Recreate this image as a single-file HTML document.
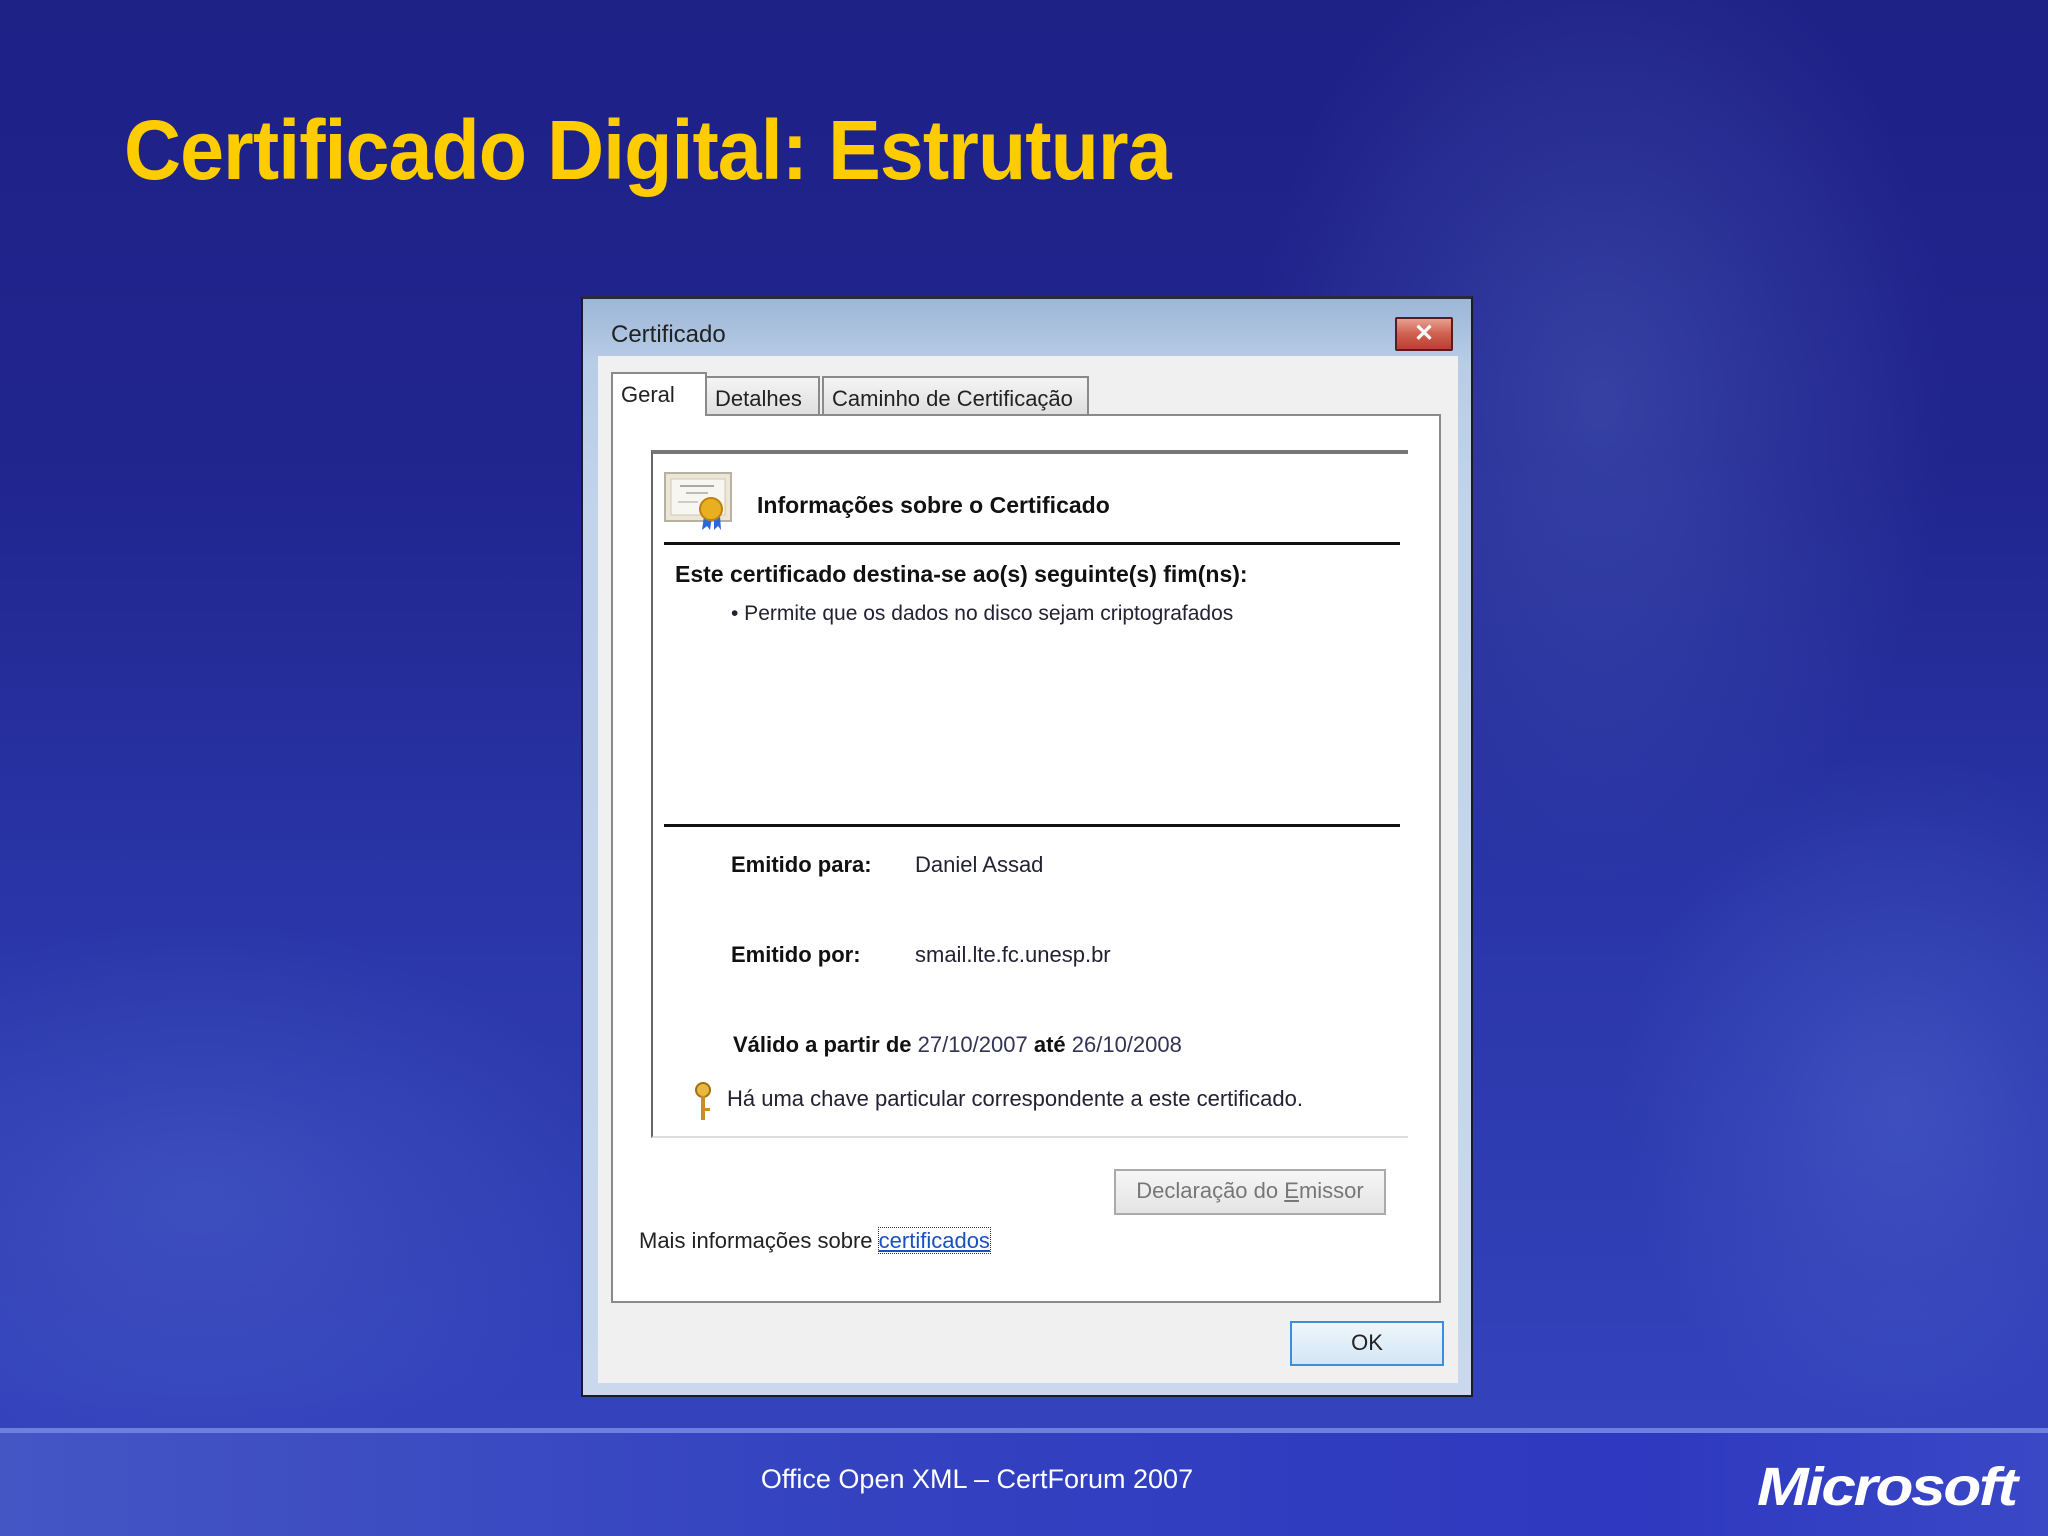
<!DOCTYPE html>
<html><head><meta charset="utf-8"><style>
*{margin:0;padding:0;box-sizing:border-box}
body{width:2048px;height:1536px;overflow:hidden;position:relative;font-family:"Liberation Sans",sans-serif;
background:linear-gradient(180deg,#1e2186 0%,#20258e 30%,#2a36a8 60%,#3342bb 90%,#3540bc 100%);}
.glow{position:absolute;inset:0;background:radial-gradient(ellipse 500px 700px at 1600px 400px,rgba(120,150,230,.25),transparent 70%),radial-gradient(ellipse 600px 400px at 200px 1200px,rgba(100,130,220,.25),transparent 70%),radial-gradient(ellipse 400px 500px at 1900px 1100px,rgba(110,140,230,.25),transparent 70%);}
.title{position:absolute;left:124px;top:102px;font-size:84px;font-weight:bold;color:#ffcc00;white-space:nowrap;transform-origin:0 0;transform:scaleX(0.94);letter-spacing:-1px}
.fline{position:absolute;left:0;top:1428px;width:2048px;height:5px;background:#6f7fe0}
.fband{position:absolute;left:0;top:1433px;width:2048px;height:103px;background:linear-gradient(90deg,#4456c4,#3443c0 40%,#2e38c0 80%,#3a48c6)}
.foot{position:absolute;left:0;width:1954px;top:1464px;text-align:center;color:#fff;font-size:27px}
.ms{position:absolute;left:1757px;top:1456px;color:#fff;font-size:54px;font-weight:bold;font-style:italic;letter-spacing:-2px;transform:scaleX(1.15);transform-origin:0 0}
.dlg{position:absolute;left:581px;top:296px;width:892px;height:1101px;background:linear-gradient(180deg,#9db7d8 0%,#b8cde6 6%,#c2d4ea 20%,#c9d8ec 100%);border:2px solid #1a1a2a;border-top:3px solid #2a2a3a}
.ttl{position:absolute;left:28px;top:22px;font-size:24px;color:#222}
.close{position:absolute;left:812px;top:18px;width:58px;height:34px;background:linear-gradient(180deg,#e8a090,#d06050 50%,#b84030);border:2px solid #5a1a20;border-radius:2px;color:#fff;font-weight:bold;font-size:24px;text-align:center;line-height:29px}
.client{position:absolute;left:15px;top:57px;width:860px;height:1027px;background:#f0f0f0}
.tabpage{position:absolute;left:13px;top:58px;width:830px;height:889px;background:#fff;border:2px solid #8a8a8a}
.tab{position:absolute;top:20px;height:40px;border:2px solid #8a8a8a;border-bottom:none;font-size:22px;color:#222;padding:8px 0 0 8px;background:linear-gradient(#f4f4f4,#dedede)}
.inner{position:absolute;left:38px;top:34px;width:757px;height:688px;border-left:2px solid #666;border-top:4px solid #777;border-bottom:2px solid #ddd}
.t{position:absolute;white-space:nowrap;color:#111}
.b{font-weight:bold}
.btn{position:absolute;border:2px solid #aaa;background:linear-gradient(#f6f6f6,#e4e4e4);font-size:22px;color:#777;text-align:center}
</style></head><body>
<div class="glow"></div>
<div class="title">Certificado Digital: Estrutura</div>
<div class="fband"></div><div class="fline"></div>
<div class="foot">Office Open XML – CertForum 2007</div>
<div class="ms">Microsoft</div>

<div class="dlg">
 <div class="ttl">Certificado</div>
 <div class="close">✕</div>
 <div class="client">
  <div class="tab" style="left:13px;top:16px;width:96px;height:44px;background:#fff;z-index:2;border-bottom:none">Geral</div>
  <div class="tab" style="left:107px;width:115px">Detalhes</div>
  <div class="tab" style="left:224px;width:267px">Caminho de Certificação</div>
  <div class="tabpage">
   <div class="inner">
    <svg style="position:absolute;left:11px;top:18px" width="70" height="60" viewBox="0 0 70 60">
     <rect x="1" y="1" width="66" height="48" fill="#ece6d8" stroke="#b8b0a0" stroke-width="2"/>
     <rect x="7" y="7" width="54" height="36" fill="#f8f6f0" stroke="#d0c8b8"/>
     <line x1="16" y1="14" x2="50" y2="14" stroke="#aaa" stroke-width="2"/>
     <line x1="22" y1="21" x2="44" y2="21" stroke="#bbb" stroke-width="2"/>
     <line x1="14" y1="30" x2="34" y2="30" stroke="#ccc" stroke-width="2"/>
     <path d="M40 44 L38 58 L43 54 L46 58 L48 44Z M50 44 L50 58 L54 54 L57 58 L56 44Z" fill="#2a6ad8"/>
     <circle cx="47" cy="37" r="11" fill="#e8b020" stroke="#c08010" stroke-width="2"/>
    </svg>
    <div class="t b" style="left:104px;top:38px;font-size:23px">Informações sobre o Certificado</div>
    <div style="position:absolute;left:11px;top:88px;width:736px;height:3px;background:#111"></div>
    <div class="t b" style="left:22px;top:107px;font-size:23px">Este certificado destina-se ao(s) seguinte(s) fim(ns):</div>
    <div class="t" style="left:78px;top:148px;font-size:21px;color:#223">• Permite que os dados no disco sejam criptografados</div>
    <div style="position:absolute;left:11px;top:370px;width:736px;height:3px;background:#111"></div>
    <div class="t b" style="left:78px;top:398px;font-size:22px">Emitido para:</div>
    <div class="t" style="left:262px;top:398px;font-size:22px;color:#223">Daniel Assad</div>
    <div class="t b" style="left:78px;top:488px;font-size:22px">Emitido por:</div>
    <div class="t" style="left:262px;top:488px;font-size:22px;color:#223">smail.lte.fc.unesp.br</div>
    <div class="t b" style="left:80px;top:578px;font-size:22px">Válido a partir de <span style="font-weight:normal;color:#335">27/10/2007</span> até <span style="font-weight:normal;color:#335">26/10/2008</span></div>
    <svg style="position:absolute;left:40px;top:628px" width="22" height="40" viewBox="0 0 22 40"><circle cx="10" cy="8" r="7" fill="#e8b840" stroke="#a07010" stroke-width="2"/><rect x="8" y="14" width="4" height="24" fill="#c89020"/><rect x="12" y="26" width="5" height="3" fill="#c89020"/></svg>
    <div class="t" style="left:74px;top:632px;font-size:22px;color:#223">Há uma chave particular correspondente a este certificado.</div>
   </div>
   <div class="btn" style="left:501px;top:753px;width:272px;height:46px;line-height:40px">Declaração do <u>E</u>missor</div>
   <div class="t" style="left:26px;top:812px;font-size:22px;color:#222">Mais informações sobre <span style="color:#1a50c0;text-decoration:underline;outline:1px dotted #333">certificados</span></div>
  </div>
  <div class="btn" style="left:692px;top:965px;width:154px;height:45px;line-height:39px;color:#222;border-color:#3b8fd8;background:linear-gradient(#eef6fc,#d4e6f4)">OK</div>
 </div>
</div>
</body></html>
